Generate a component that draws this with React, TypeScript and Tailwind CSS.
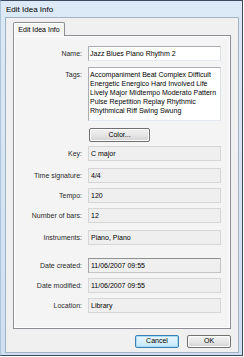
const font = "font-['Liberation_Sans',Arial,sans-serif]";

type Row = { label: string; value: string; gap: string; tone?: "plain" | "sunken" };

const rows: Row[] = [
  { label: "Key:", value: "C major", gap: "mt-[4px]" },
  { label: "Time signature:", value: "4/4", gap: "mt-[7px]" },
  { label: "Tempo:", value: "120", gap: "mt-[5px]" },
  { label: "Number of bars:", value: "12", gap: "mt-[5px]" },
  { label: "Instruments:", value: "Piano, Piano", gap: "mt-[7px]" },
  { label: "Date created:", value: "11/06/2007 09:55", gap: "mt-[13px]", tone: "sunken" },
  { label: "Date modified:", value: "11/06/2007 09:55", gap: "mt-[5px]" },
  { label: "Location:", value: "Library", gap: "mt-[5px]" },
];

const tags = [
  "Accompaniment Beat Complex Difficult",
  "Energetic Energico Hard Involved Life",
  "Lively Major Midtempo Moderato Pattern",
  "Pulse Repetition Replay Rhythmic",
  "Rhythmical Riff Swing Swung",
];

function Label({ children }: { children: React.ReactNode }) {
  return (
    <div className="w-[68px] shrink-0 text-right text-[7px] leading-[15px] text-[#2a2a2a] whitespace-nowrap">
      {children}
    </div>
  );
}

function VistaButton({ children, focused }: { children: React.ReactNode; focused?: boolean }) {
  return (
    <div
      className={
        focused
          ? "w-[44px] h-[13px] rounded-[2px] border border-[#3c7fb1] bg-gradient-to-b from-[#eaf6fd] via-[#d9f0fc] to-[#bee6fd] flex items-center justify-center text-[7px] text-black shadow-[inset_0_0_0_1px_#a6dcf7]"
          : "w-[44px] h-[13px] rounded-[2px] border border-[#707070] bg-gradient-to-b from-[#f2f2f2] via-[#e6e6e6] to-[#d2d2d2] flex items-center justify-center text-[7px] text-black shadow-[inset_0_0_0_1px_#fcfcfc]"
      }
    >
      {children}
    </div>
  );
}

export default function App() {
  return (
    <div className={`w-[244px] h-[357px] bg-white ${font}`}>
      <div className="w-[243px] h-[356px] flex flex-col border border-[#3b4a5c] border-l-[#aec4da] bg-gradient-to-b from-[#dce9f6] to-[#cfe0f1]">
        {/* Title bar */}
        <div className="h-[16px] shrink-0 pl-[5px] text-[8px] leading-[17px] text-black">Edit Idea Info</div>

        {/* Client area */}
        <div className="ml-[4px] mr-[3px] mb-[2px] flex-1 border border-[#a3b3c4] bg-[#f0f0f0] flex flex-col pl-[7px] pt-[4px]">
          {/* Tab */}
          <div className="relative z-10 -mb-px w-[52px] h-[14px] border border-b-0 border-[#8c8e94] bg-[#f4f4f4] rounded-t-[2px] text-[7px] leading-[13px] text-black text-center shadow-[inset_1px_1px_0_#ffffff]">
            Edit Idea Info
          </div>

          {/* Panel */}
          <div className="w-[218px] h-[294px] border border-[#8c8e94] bg-[#f4f4f4] shadow-[inset_1px_1px_0_#ffffff,inset_-1px_-1px_0_#ffffff] flex flex-col">
            <div className="flex mt-[10px]">
              <Label>Name:</Label>
              <div className="ml-[6px] w-[133px] h-[15px] border border-[#abadb3] border-b-[#e3e9ef] border-r-[#dbdfe6] bg-white pl-[1px] text-[7px] leading-[13px] text-black whitespace-nowrap">
                Jazz Blues Piano Rhythm 2
              </div>
            </div>

            <div className="flex mt-[6px]">
              <div className="w-[68px] shrink-0 text-right text-[7px] leading-[9px] pt-[3px] text-[#2a2a2a]">Tags:</div>
              <div className="ml-[6px] w-[133px] h-[54px] border border-[#abadb3] border-b-[#e3e9ef] border-r-[#dbdfe6] bg-white pl-[1px] pt-[2px] text-[7px] leading-[9px] text-black">
                {tags.map((t) => (
                  <div key={t} className="whitespace-nowrap">
                    {t}
                  </div>
                ))}
              </div>
            </div>

            <div className="flex mt-[7px] pl-[75px]">
              <div className="w-[61px] h-[14px] rounded-[2px] border border-[#707070] bg-gradient-to-b from-[#f2f2f2] via-[#e6e6e6] to-[#d2d2d2] shadow-[inset_0_0_0_1px_#fcfcfc] flex items-center justify-center text-[7px] text-black">
                Color...
              </div>
            </div>

            {rows.map((r) => (
              <div key={r.label} className={`flex ${r.gap}`}>
                <Label>{r.label}</Label>
                <div
                  className={
                    r.tone === "sunken"
                      ? "ml-[6px] w-[133px] h-[15px] border border-[#c4c4c4] border-t-[#8e8f8f] border-l-[#a5a5a5] bg-[#efefef] pl-[2px] text-[7px] leading-[13px] text-black whitespace-nowrap"
                      : "ml-[6px] w-[133px] h-[15px] border border-[#d6d6d6] bg-[#efefef] pl-[2px] text-[7px] leading-[13px] text-black whitespace-nowrap"
                  }
                >
                  {r.value}
                </div>
              </div>
            ))}
          </div>

          {/* Buttons */}
          <div className="w-[218px] mt-[6px] flex justify-end gap-[8px]">
            <VistaButton focused>Cancel</VistaButton>
            <VistaButton>OK</VistaButton>
          </div>
        </div>
      </div>
    </div>
  );
}
